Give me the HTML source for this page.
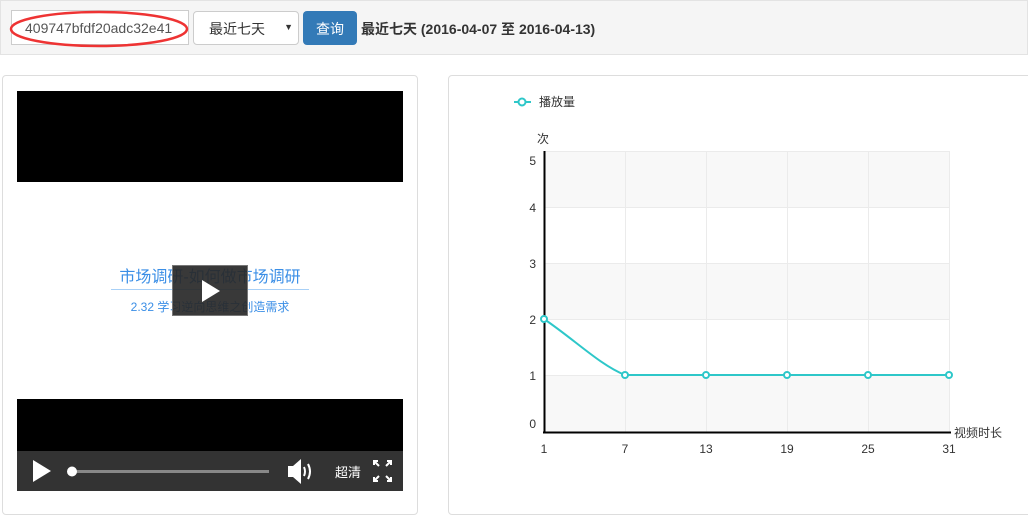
<!DOCTYPE html><html><head><meta charset="utf-8"><style>
*{box-sizing:border-box}body{margin:0;width:1028px;height:503px;overflow:hidden;background:#fff;font-family:"Liberation Sans","Noto Sans CJK SC",sans-serif;position:relative}
.a{position:absolute}
</style></head><body>
<div class="a" style="left:0;top:0;width:1028px;height:55px;background:#f5f5f5;border:1px solid #e3e3e3"></div>
<div class="a" style="left:11px;top:10px;width:178px;height:35px;background:#fff;border:1px solid #ccc;font-size:14px;color:#555;padding:9px 0 0 13px">409747bfdf20adc32e41</div>
<svg class="a" style="left:0;top:0" width="200" height="60"><ellipse cx="99" cy="29" rx="88" ry="17" fill="none" stroke="#e33" stroke-width="2.5"/></svg>
<div class="a" style="left:193px;top:11px;width:106px;height:34px;background:#fff;border:1px solid #ccc;border-radius:4px;font-size:14px;color:#333;padding:7px 0 0 15px">最近七天<span style="position:absolute;right:5px;top:10px;font-size:9px">▼</span></div>
<div class="a" style="left:303px;top:11px;width:54px;height:34px;background:#337ab7;border-radius:4px;color:#fff;font-size:14px;text-align:center;padding-top:8px">查询</div>
<div class="a" style="left:361px;top:19px;font-size:14px;font-weight:bold;color:#333">最近七天 (2016-04-07 至 2016-04-13)</div>
<div class="a" style="left:2px;top:75px;width:416px;height:440px;border:1px solid #ddd;border-radius:4px"></div>
<div class="a" style="left:448px;top:75px;width:590px;height:440px;border:1px solid #ddd;border-radius:4px"></div>
<div class="a" style="left:17px;top:91px;width:386px;height:91px;background:#000"></div>
<div class="a" style="left:17px;top:263px;width:386px;text-align:center;font-size:16px;color:#3a8ee6">市场调研-如何做市场调研</div>
<div class="a" style="left:111px;top:289px;width:198px;height:1px;background:#a8d0f7"></div>
<div class="a" style="left:17px;top:298px;width:386px;text-align:center;font-size:12px;color:#3a8ee6">2.32 学习逆向思维之创造需求</div>
<div class="a" style="left:172px;top:265px;width:76px;height:51px;background:rgba(40,40,40,.92);border:1px solid #777"></div>
<svg class="a" style="left:200px;top:279px" width="22" height="24"><path d="M2 1L20 12L2 23Z" fill="#fff"/></svg>
<div class="a" style="left:17px;top:399px;width:386px;height:52px;background:#000"></div>
<div class="a" style="left:17px;top:451px;width:386px;height:40px;background:#333"></div>
<svg class="a" style="left:17px;top:451px" width="386" height="40">
<path d="M16 9L34 20L16 31Z" fill="#fff"/>
<rect x="55" y="19" width="197" height="3" fill="#888"/><circle cx="55" cy="20.5" r="5" fill="#fff"/>
<path d="M271 15h5l8-7v25l-8-7h-5z" fill="#fff"/><path d="M287 16q2 4.5 0 9M291 13q4 7.5 0 15" stroke="#fff" stroke-width="2" fill="none"/>
<text x="318" y="26" font-size="13" fill="#fff" font-family="Noto Sans CJK SC">超清</text>
<path d="M357 14v-4h4M370 10h4v4M374 26v4h-4M361 30h-4v-4M358 11l4 4M373 11l-4 4M373 29l-4-4M358 29l4-4" stroke="#fff" stroke-width="2" fill="none"/>
</svg>
<svg class="a" style="left:448px;top:75px" width="580" height="428" font-family="Liberation Sans,Noto Sans CJK SC,sans-serif" font-size="12" fill="#333">
<g transform="translate(-448,-75)">
<path d="M514 102h4M526 102h5" stroke="#2ec7c9" stroke-width="2"/><circle cx="522" cy="102" r="3.5" fill="#fff" stroke="#2ec7c9" stroke-width="2"/>
<text x="539" y="106">播放量</text>
<text x="537" y="143">次</text>
<rect x="544" y="151" width="405" height="56" fill="#f8f8f8"/><rect x="544" y="263" width="405" height="56" fill="#f8f8f8"/><rect x="544" y="375" width="405" height="57" fill="#f8f8f8"/>
<g stroke="#ebebeb"><path d="M544 151.5h405M544 207.5h405M544 263.5h405M544 319.5h405M544 375.5h405M625.5 151v281M706.5 151v281M787.5 151v281M868.5 151v281M949.5 151v281"/></g>
<path d="M544.5 151v282M543 432.5h408" stroke="#000" stroke-width="2"/>
<g text-anchor="end"><text x="536" y="165">5</text><text x="536" y="212">4</text><text x="536" y="268">3</text><text x="536" y="324">2</text><text x="536" y="380">1</text><text x="536" y="428">0</text></g>
<g text-anchor="middle"><text x="544" y="453">1</text><text x="625" y="453">7</text><text x="706" y="453">13</text><text x="787" y="453">19</text><text x="868" y="453">25</text><text x="949" y="453">31</text></g>
<text x="954" y="437">视频时长</text>
<path d="M544 319C575 340 600 365 625 375H949" stroke="#2ec7c9" stroke-width="2" fill="none"/>
<g fill="#fff" stroke="#2ec7c9" stroke-width="2"><circle cx="544" cy="319" r="3"/><circle cx="625" cy="375" r="3"/><circle cx="706" cy="375" r="3"/><circle cx="787" cy="375" r="3"/><circle cx="868" cy="375" r="3"/><circle cx="949" cy="375" r="3"/></g>
</g></svg>
</body></html>
